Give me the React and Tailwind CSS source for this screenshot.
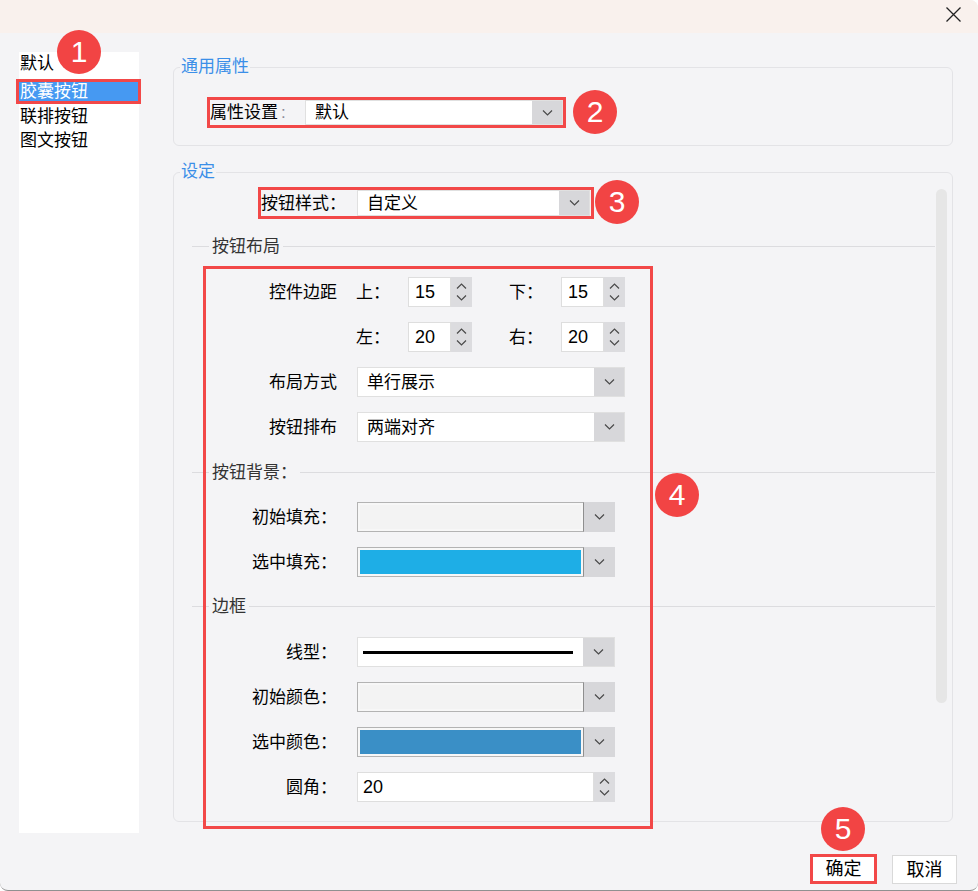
// Button style settings dialog (capsule button selected)
const RED = "border-[#f24848]";

function Chevron({ up }) {
  return (
    <svg width="11" height="6" viewBox="0 0 11 6" fill="none" stroke="#4a4a4a" strokeWidth="1.2">
      <path d={up ? "M1 5.5L5.5 1L10 5.5" : "M1 0.5L5.5 5L10 0.5"} />
    </svg>
  );
}

function Badge({ n, className }) {
  return (
    <div
      className={`absolute flex h-[44px] w-[44px] items-center justify-center rounded-full bg-[#f24444] font-['Liberation_Sans',sans-serif] text-[30px] leading-none text-white ${className}`}
    >
      {n}
    </div>
  );
}

function Spinner({ value }) {
  return (
    <div className="flex h-[30px] w-[64px]">
      <div className="flex w-[43px] items-center border border-[#dedede] bg-white pl-[6px] text-[18px] leading-none text-black">
        {value}
      </div>
      <div className="flex w-[21px] flex-col items-center justify-center gap-[6px] bg-[#dcdcdf]">
        <Chevron up />
        <Chevron />
      </div>
    </div>
  );
}

function Combo({ text, className }) {
  return (
    <div className={`flex border border-[#e0e0e0] bg-white ${className}`}>
      <div className="flex flex-1 items-center pl-[9px] text-[17px] leading-none text-black">{text}</div>
      <div className="flex w-[30px] items-center justify-center bg-[#d7d7da]">
        <Chevron />
      </div>
    </div>
  );
}

function Swatch({ fill }) {
  return (
    <div className="flex h-[30px] w-[258px]">
      <div className="flex-1 border border-[#b3b3b3] border-r-[#8f8f8f] bg-[#f7f7f7] p-[2px]">
        <div className={`h-full ${fill}`} />
      </div>
      <div className="flex w-[31px] items-center justify-center bg-[#d7d7da]">
        <Chevron />
      </div>
    </div>
  );
}

function Sep({ label, className }) {
  return (
    <div className={`ml-[18px] flex h-[18px] items-center ${className}`}>
      <div className="h-px w-[17px] bg-[#dcdcdf]" />
      <span className="px-[3px] text-[17px] leading-none text-[#333]">{label}</span>
      <div className="h-px flex-1 bg-[#dcdcdf]" />
    </div>
  );
}

function Row({ label, children, className = "mt-[15px]" }) {
  return (
    <div className={`flex h-[30px] items-center ${className}`}>
      <div className="w-[163px] text-right text-[17px] leading-none text-black">{label}</div>
      <div className="ml-[20px]">{children}</div>
    </div>
  );
}

export default function App() {
  const items = ["联排按钮", "图文按钮"];

  return (
    <div className="relative h-[891px] w-[978px] overflow-hidden rounded-tr-[8px] rounded-b-[8px] border-b border-[#909090] bg-[#f4f4f6] font-['Liberation_Sans','Noto_Sans_CJK_SC',sans-serif] text-black">
      {/* title bar */}
      <div className="flex h-[33px] justify-end bg-[#f9f1ed] pr-[17px] pt-[7px]">
        <svg width="15" height="15" viewBox="0 0 15 15" stroke="#222" strokeWidth="1.3">
          <path d="M0.5 0.5L14.5 14.5M14.5 0.5L0.5 14.5" />
        </svg>
      </div>

      <div className="flex">
        {/* left list */}
        <div className="pl-[19px] pt-[19px]">
          <div className="h-[781px] w-[120px] bg-white text-[17px] leading-none">
            <div className="flex h-[22px] items-center pl-[1px]">默认</div>
            <div className={`-ml-[3px] -mr-[2px] mt-[5px] border-[3px] ${RED}`}>
              <div className="flex h-[19px] items-center bg-[#4699f2] pl-[1px] text-white">胶囊按钮</div>
            </div>
            {items.map((t) => (
              <div key={t} className="flex h-[24px] items-center pl-[1px]">
                {t}
              </div>
            ))}
          </div>
        </div>

        {/* right column */}
        <div className="ml-[34px] flex w-[784px] flex-col pt-[25px]">
          <fieldset className="w-[780px] rounded-[6px] border border-[#e3e3e6] pb-[17px]">
            <legend className="ml-[6px] px-[1px] text-[17px] leading-[18px] text-[#3b8fe8]">通用属性</legend>
            <div className={`ml-[33px] mt-[21px] flex h-[31px] w-[359px] items-center border-[3px] ${RED}`}>
              <div className="flex w-[95px] items-center text-[17px] leading-none">
                属性设置<span className="ml-[3px] text-[#8c8c99]">:</span>
              </div>
              <Combo text="默认" className="h-full w-[258px]" />
            </div>
          </fieldset>

          <fieldset className="mt-[17px] w-[780px] rounded-[6px] border border-[#e3e3e6] pb-[19px]">
            <legend className="ml-[6px] px-[1px] text-[17px] leading-[18px] text-[#3b8fe8]">设定</legend>
            <div className="flex">
              <div className="flex-1">
                <div className={`ml-[84px] mt-[6px] flex h-[32px] w-[336px] items-center border-[3px] ${RED}`}>
                  <div className="w-[96px] text-[17px] leading-none">按钮样式：</div>
                  <Combo text="自定义" className="h-full w-[233px]" />
                </div>

                <Sep label="按钮布局" className="mt-[18px]" />

                <div className="ml-[95px] mt-[22px] flex h-[30px] items-center text-[17px] leading-none">
                  <div className="w-[87px]">控件边距</div>
                  <div className="w-[52px]">上：</div>
                  <Spinner value="15" />
                  <div className="ml-[37px] w-[52px]">下：</div>
                  <Spinner value="15" />
                </div>
                <div className="ml-[182px] mt-[15px] flex h-[30px] items-center text-[17px] leading-none">
                  <div className="w-[52px]">左：</div>
                  <Spinner value="20" />
                  <div className="ml-[37px] w-[52px]">右：</div>
                  <Spinner value="20" />
                </div>
                <div className="ml-[95px] mt-[15px] flex h-[30px] items-center text-[17px] leading-none">
                  <div className="w-[88px]">布局方式</div>
                  <Combo text="单行展示" className="h-[30px] w-[268px]" />
                </div>
                <div className="ml-[95px] mt-[15px] flex h-[30px] items-center text-[17px] leading-none">
                  <div className="w-[88px]">按钮排布</div>
                  <Combo text="两端对齐" className="h-[30px] w-[268px]" />
                </div>

                <Sep label="按钮背景：" className="mt-[21px]" />

                <Row label="初始填充：" className="mt-[21px]">
                  <Swatch fill="bg-[#f3f3f3]" />
                </Row>
                <Row label="选中填充：">
                  <Swatch fill="bg-[#1eaee6]" />
                </Row>

                <Sep label="边框" className="mt-[20px]" />

                <Row label="线型：" className="mt-[22px]">
                  <div className="flex h-[30px] w-[258px] border border-[#e0e0e0] bg-white">
                    <div className="flex flex-1 items-center pl-[5px]">
                      <div className="h-[3px] w-[210px] bg-black" />
                    </div>
                    <div className="flex w-[31px] items-center justify-center bg-[#d7d7da]">
                      <Chevron />
                    </div>
                  </div>
                </Row>
                <Row label="初始颜色：">
                  <Swatch fill="bg-[#f3f3f3]" />
                </Row>
                <Row label="选中颜色：">
                  <Swatch fill="bg-[#3a8fc6]" />
                </Row>
                <Row label="圆角：">
                  <div className="flex h-[30px] w-[258px]">
                    <div className="flex flex-1 items-center border border-[#dedede] bg-white pl-[5px] text-[18px] leading-none">
                      20
                    </div>
                    <div className="flex w-[21px] flex-col items-center justify-center gap-[6px] bg-[#dcdcdf]">
                      <Chevron up />
                      <Chevron />
                    </div>
                  </div>
                </Row>
              </div>
              <div className="ml-[1px] mr-[5px] mt-[8px] h-[514px] w-[11px] rounded-full bg-[#e6e6e6]" />
            </div>
          </fieldset>

          {/* footer buttons */}
          <div className="mt-[32px] flex items-start justify-end gap-[15px]">
            <div className={`h-[30px] w-[67px] border-[3px] ${RED}`}>
              <div className="flex h-full items-center justify-center bg-white text-[18px] leading-none">确定</div>
            </div>
            <div className="mt-[1px] flex h-[29px] w-[65px] items-center justify-center border border-[#d9d9d9] bg-white text-[18px] leading-none">
              取消
            </div>
          </div>
        </div>
      </div>

      {/* annotations */}
      <div className={`absolute left-[203px] top-[266px] h-[563px] w-[450px] border-[3px] ${RED}`} />
      <Badge n="1" className="left-[57px] top-[30px]" />
      <Badge n="2" className="left-[573px] top-[90px]" />
      <Badge n="3" className="left-[595px] top-[180px]" />
      <Badge n="4" className="left-[655px] top-[473px]" />
      <Badge n="5" className="left-[821px] top-[807px]" />
    </div>
  );
}
